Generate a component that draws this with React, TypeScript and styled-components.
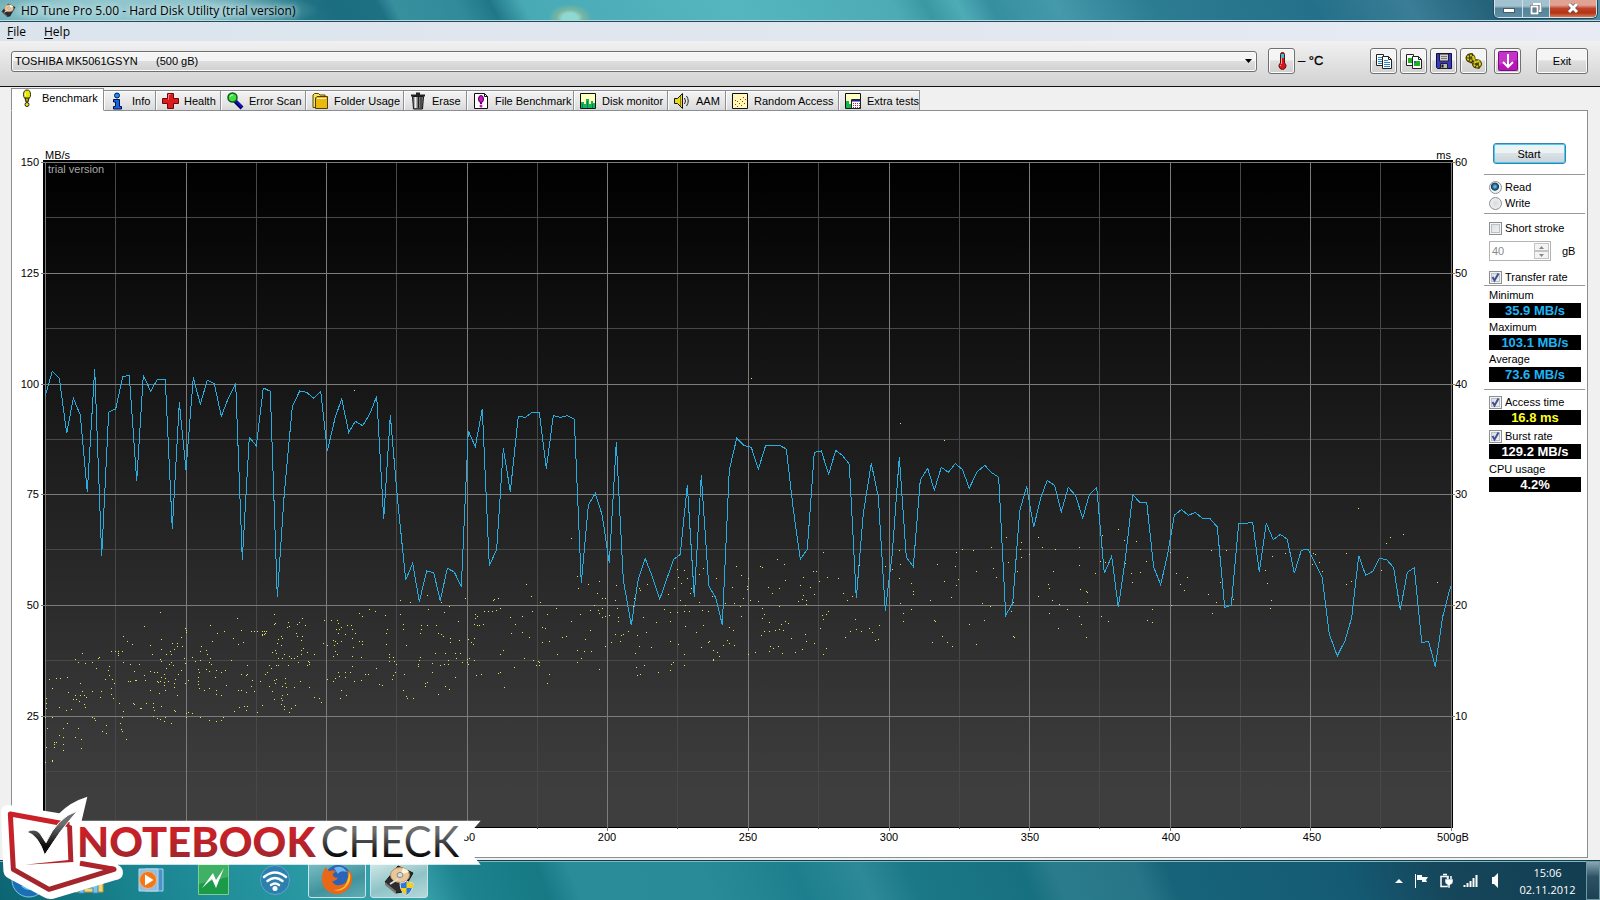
import React, { useState } from 'react';
import styled, { createGlobalStyle, css } from 'styled-components';

const ui = '"Liberation Sans", Arial, sans-serif';
const segoe = '"Open Sans", "Noto Sans", sans-serif';

const GlobalStyle = createGlobalStyle`
  *, *::before, *::after { box-sizing: border-box; }
  body { margin: 0; background: #f0f0f0; font: 11px/14px ${ui}; color: #000; }
  button, input, select { font: inherit; color: inherit; margin: 0; }
`;

/* ---------- window frame ---------- */

const Desktop = styled.div`
  position: relative;
  display: flex;
  flex-direction: column;
  min-height: 100vh;
`;

const TitleBar = styled.header`
  display: flex;
  align-items: center;
  height: 22px;
  padding-left: 1px;
  border-bottom: 1px solid #24475a;
  box-shadow: inset 0 -1px 0 #b5dbe3;
  background:
    radial-gradient(ellipse 22px 14px at 570px 18px, #8fd8d0 0 35%, #79b5a0 60%, transparent 100%),
    radial-gradient(ellipse 190px 26px at 130px 10px, #a5d2d8cc 0 50%, transparent 100%),
    linear-gradient(62deg, #4f9ba6 0, #2f8593 15%, #1b6d7f 21%, #1d7183 24%, #38909e 25%, #2f8a99 29%, #217788 31%,
      #48aab5 33%, #56b6c0 46%, #4cabb5 56%, #3a98a2 58%, #4dacb6 60%, #358f9e 62%, #4499aa 66%, #2c7c92 72%,
      #24708a 82%, #3a7d96 88%, #246279 93%, #5590a8 100%);
`;

const WindowTitle = styled.h1`
  flex: 1;
  margin: 0 0 0 5px;
  font: 400 12px/20px ${segoe};
  text-shadow: 0 0 6px #d8eef0, 0 0 6px #d8eef0;
`;

const WindowControls = styled.div`
  display: flex;
  align-self: flex-start;
  height: 18px;
  margin-right: 3px;
  border: 1px solid #cfe3ea;
  border-top: 0;
  border-radius: 0 0 5px 5px;
  overflow: hidden;
  box-shadow: 0 0 0 1px #25475a;
`;

const WindowButton = styled.button<{ $close?: boolean }>`
  display: grid;
  place-items: center;
  width: ${p => (p.$close ? 47 : 27)}px;
  padding: 0;
  border: 0;
  border-left: 1px solid #cfe0e8;
  background: ${p =>
    p.$close
      ? 'linear-gradient(#e0a293 0 30%, #c04228 50%, #b23418 75%, #d9754f)'
      : 'linear-gradient(#a3c2cf 0 35%, #55839a 50%, #5c8ea4)'};
  &:first-child { border-left: 0; }
`;

const MenuBar = styled.nav`
  display: flex;
  gap: 18px;
  height: 19px;
  padding-left: 7px;
  background: linear-gradient(90deg, #dbe4ed, #e2e7ef 60%, #e8ebf4);
`;

const MenuItem = styled.button`
  padding: 0;
  border: 0;
  background: none;
  font: 12px/20px ${segoe};
  u { text-underline-offset: 2px; }
`;

const ToolBar = styled.div`
  display: flex;
  align-items: center;
  height: 46px;
  padding: 0 12px 5px 11px;
  border-bottom: 1px solid #111;
  background: linear-gradient(#f1f1f1, #d2d2d2);
`;

const chrome = css`
  border: 1px solid #707070;
  border-radius: 3px;
  background: linear-gradient(#f4f4f4 0 45%, #dedede 50%, #d0d0d0);
  box-shadow: inset 0 0 0 1px #fbfbfb;
`;

const DriveField = styled.div`
  position: relative;
  flex: 1;
  display: flex;
  svg { position: absolute; right: 5px; top: 8px; pointer-events: none; }
`;

const DriveSelect = styled.select`
  ${chrome}
  appearance: none;
  width: 100%;
  height: 21px;
  padding: 0 3px;
`;

const ToolButton = styled.button<{ $wide?: boolean; $gap?: number }>`
  ${chrome}
  display: grid;
  place-items: center;
  width: ${p => (p.$wide ? 52 : 27)}px;
  height: 26px;
  margin-left: ${p => p.$gap ?? 3}px;
  padding: 0;
`;

const Temperature = styled.output`
  width: 69px;
  margin-left: 3px;
  font-size: 13px;
  -webkit-text-stroke: 0.3px #000;
`;

/* ---------- tabs and page ---------- */

const TabStrip = styled.div`
  display: flex;
  align-items: flex-end;
  height: 24px;
  margin: 0 11px -1px;
  position: relative;
`;

const Tab = styled.button<{ $w: number; $active?: boolean }>`
  display: flex;
  align-items: center;
  gap: 5px;
  width: ${p => p.$w}px;
  height: ${p => (p.$active ? 23 : 21)}px;
  padding: 0 0 0 5px;
  white-space: nowrap;
  border: 1px solid #8c8e96;
  border-left-width: ${p => (p.$active ? 1 : 0)}px;
  background: ${p => (p.$active ? '#fff' : 'linear-gradient(#f3f3f3, #e6e6e6 60%, #d9d9d9)')};
  box-shadow: ${p => (p.$active ? 'none' : 'inset 1px 1px 0 #fcfcfc')};
  border-bottom-color: ${p => (p.$active ? '#fff' : '#8c8e96')};
  svg { flex: none; }
  ${p => p.$active && 'gap: 7px; padding-bottom: 4px;'}
`;

const Page = styled.main`
  flex: 1;
  display: flex;
  margin: 0 12px 2px 11px;
  border: 1px solid #8b8f92;
  background: #fff;
`;

const Chart = styled.section`
  flex: 1;
  min-width: 0;
  display: grid;
  grid-template: 16px 1fr 29px / 31px 1fr 31px;
  padding-top: 33px;
`;

const UnitRow = styled.div`
  grid-column: 2;
  display: flex;
  justify-content: space-between;
  padding: 0 2px;
  line-height: 22px;
`;

const AxisLabels = styled.ol<{ $side: 'left' | 'right' }>`
  grid-row: 2;
  grid-column: ${p => (p.$side === 'left' ? 1 : 3)};
  display: flex;
  flex-direction: column;
  margin: -5px 0 8px;
  padding: ${p => (p.$side === 'left' ? '0 4px 0 0' : '0 0 0 2px')};
  text-align: ${p => (p.$side === 'left' ? 'right' : 'left')};
  list-style: none;
  li { flex: 1; }
`;

const PlotFrame = styled.div`
  grid-row: 2;
  grid-column: 2;
  position: relative;
  border: solid #000;
  border-width: 2px 1px 1px 2px;
  background: linear-gradient(#000, #141414 30%, #3e3e3e 95%);
`;

const PlotSvg = styled.svg`
  position: absolute;
  inset: 0;
  width: 100%;
  height: 100%;
  overflow: visible;
`;

const Watermark = styled.span`
  position: absolute;
  left: 3px;
  top: 0;
  color: #a8a8a8;
`;

const CapacityLabels = styled.ol`
  grid-row: 3;
  grid-column: 2;
  display: flex;
  margin: 2px -5% 0 5%;
  padding: 0;
  list-style: none;
  text-align: center;
  li { flex: 1; }
`;

/* ---------- side panel ---------- */

const SidePanel = styled.aside`
  display: flex;
  flex-direction: column;
  flex: none;
  width: 101px;
  margin: 32px 2px 0 0;
`;

const StartButton = styled.button`
  align-self: center;
  width: 73px;
  height: 21px;
  margin: 0 0 10px -11px;
  padding: 0;
  border: 1px solid #3c7fb1;
  border-radius: 3px;
  box-shadow: inset 0 0 0 1px #46cdf5;
  background: linear-gradient(#edf2f5 0 45%, #dbe2e6 50%, #c7d3da);
`;

const Rule = styled.hr`
  width: 100%;
  height: 1px;
  margin: 0;
  border: 0;
  background: #9a9a9a;
`;

const Group = styled.div<{ $gap?: number; $pad: string }>`
  display: flex;
  flex-direction: column;
  gap: ${p => p.$gap ?? 0}px;
  padding: ${p => p.$pad};
`;

const Choice = styled.label`
  display: flex;
  align-items: center;
  gap: 3px;
  height: 16px;
  white-space: nowrap;
`;

const Radio = styled.input.attrs({ type: 'radio' })`
  appearance: none;
  flex: none;
  width: 13px;
  height: 13px;
  border: 1px solid #8e8f8f;
  border-radius: 50%;
  background: radial-gradient(circle, #d8dbde, #f6f6f6);
  &:checked {
    background: radial-gradient(circle at 45% 42%, #7fd0f0 0, #1b5a82 32%, #123c5c 42%, #eef3f6 50%);
  }
`;

const Box = styled.span`
  display: grid;
  flex: none;
  width: 13px;
  height: 13px;
  input, svg { grid-area: 1 / 1; }
  input {
    appearance: none;
    width: 13px;
    height: 13px;
    border: 1px solid #8e8f8f;
    box-shadow: inset 0 0 0 1px #f4f4f4, inset 0 0 0 2px #bcc0c6;
    background: linear-gradient(135deg, #d5d9de, #f6f6f6);
  }
  svg { pointer-events: none; visibility: hidden; }
  input:checked + svg { visibility: visible; }
`;

const StrokeRow = styled.div`
  display: flex;
  align-items: center;
  gap: 11px;
  margin: 5px 0 8px;
`;

const Spinner = styled.div`
  display: flex;
  width: 62px;
  height: 20px;
  padding: 1px;
  border: 1px solid #b4b4b4;
  input {
    flex: 1;
    min-width: 0;
    padding: 0 1px;
    border: 0;
    background: #fff;
    color: #8a8a8a;
  }
`;

const SpinButtons = styled.div`
  display: flex;
  flex-direction: column;
  width: 15px;
`;

const SpinButton = styled.button`
  flex: 1;
  display: grid;
  place-items: center;
  min-height: 0;
  padding: 0;
  border: 1px solid #c4c4c4;
  background: #f3f3f3;
`;

const Caption = styled.div`
  height: 15px;
`;

const Reading = styled.output<{ $color: string }>`
  display: block;
  width: 92px;
  height: 15px;
  background: #000;
  color: ${p => p.$color};
  font-size: 13px;
  font-weight: 700;
  line-height: 15px;
  text-align: center;
`;

/* ---------- task bar ---------- */

const TaskBar = styled.footer`
  display: flex;
  flex: none;
  height: 40px;
  border-top: 1px solid #14404e;
  box-shadow: inset 0 1px 0 #7fb9c2;
  color: #fff;
  background: linear-gradient(68deg, #0c6472 0, #18828d 8%, #2a9aa5 20%, #3aa4ae 26%, #1d838e 29%, #167984 34%,
    #2b8c99 36%, #2a8b98 44%, #1d7f8d 50%, #2d8998 54%, #1b7886 57%, #17707f 64%, #2a7c8c 66%, #277587 71%,
    #17647a 73%, #145a73 84%, #16465a 90%, #123c50 100%);
`;

const TaskButton = styled.button<{ $state?: 'open' | 'active' }>`
  display: grid;
  place-items: center;
  width: 58px;
  height: 37px;
  margin-right: 4px;
  padding: 0;
  border: 1px solid transparent;
  border-radius: 3px;
  background: none;
  &:first-child { margin-right: 2px; }
  ${p => p.$state && css`
    border-color: #c5e5e8;
    background: ${p.$state === 'active'
      ? 'linear-gradient(160deg, #d5eaea, #8fc3c6 55%, #b4d9da)'
      : 'linear-gradient(160deg, #7fc0c6, #3f939c 60%, #5fadb4)'};
  `}
`;

const Tray = styled.div`
  display: flex;
  align-items: center;
  gap: 9px;
  margin-left: auto;
`;

const Clock = styled.time`
  width: 73px;
  margin-right: 7px;
  font: 11px/17px ${segoe};
  text-align: center;
`;

const ShowDesktop = styled.button`
  width: 14px;
  height: 39px;
  margin-left: -14px;
  padding: 0;
  border: 1px solid #6f97a4;
  background: linear-gradient(#8aa7b3, #2c5365 40%, #1c4152);
`;

const Brand = styled.svg`
  position: absolute;
  left: 0;
  bottom: 0;
  text { font-family: Lato, sans-serif; font-size: 125px; }
`;

/* ---------- measured data ---------- */

/* Each recording block has its own left edge and is stored at three units per plot pixel. */
type Block = { left: number; line: string; dots: string };
const TOP = 188;

const blocks: Block[] = [
  {
    left: -5,
    line: '16,137 37,64 58,84 80,250 100,145 121,195 142,425 164,57 185,618 206,186 227,177 248,80 268,76 290,392 310,76 332,124 352,88 376,88 397,537 418,157 438,360 460,82 481,163 502,91 523,101 544,199 565,145 587,102 607,629 628,262 649,287 670,114 691,124 712,742 733,430 757,170 779,123 800,127 821,145 842,124 862,303 885,205 905,146 926,247 946,214 968,227 989,192 1010,139 1031,506 1051,196 1072,440 1097,690 1118,640 1138,755 1160,663 1181,668 1201,752 1222,655 1243,666 1264,710 1285,243 1306,290 1327,177 1348,647 1370,598 1390,295',
    dots: '943,121 361,787 314,829 250,859 262,874 277,883 331,886 364,868 436,835 439,841 439,847 424,862 397,880 412,880 412,889 427,889 403,898 391,904 364,898 379,913 394,913 361,928 364,934 337,913 214,904 226,904 235,904 235,910 235,916 247,904 127,910 106,928 115,937 136,940 157,937 175,925 178,922 169,955 208,949 205,961 208,976 217,988 223,1000 196,988 28,988 49,985 61,985 82,982 121,1000 37,1015 85,1027 19,1045 19,1060 19,1075 16,1102 37,1102 58,1072 79,1081 94,1078 106,1036 100,1048 109,1048 121,1036 127,1024 133,1036 139,1042 118,1054 133,1063 136,1072 157,1024 184,1024 181,1042 214,1015 214,1033 220,1045 238,1060 157,1102 163,1105 166,1111 199,1126 187,1144 199,1150 241,1120 247,1102 250,1084 244,1138 247,1144 259,1168 82,1120 70,1135 22,1135 115,1135 58,1156 70,1162 106,1162 124,1168 43,1177 43,1183 49,1177 70,1183 43,1192 19,1192 70,1201 124,1195 37,1231 37,1235 16,1237 250,937 271,943 298,943 283,964 265,994 271,994 286,991 289,991 316,991 313,976 331,964 343,967 352,967 352,994 355,997 361,994 364,982 373,973 376,985 373,997 373,1006 385,994 403,1000 406,988 403,1012 376,1021 331,1021 358,1030 412,1036 280,1060 283,1063 301,1075 304,1075 319,1060 340,1060 340,1072 343,1081 340,1099 352,1105 361,1108 376,1102 373,1114 394,1120 364,1069 403,1081 406,1084 388,943 400,946 394,937 379,955 424,961 415,973 445,991 436,1000 433,925 436,940 457,922 466,934 481,931 484,889 481,904 502,913 499,901 511,925 508,937 514,943 475,958 478,967 475,982 475,994 475,1003 478,1015 499,958 508,964 529,961 544,967 556,961 526,982 508,1015 493,1021 529,1021 529,1033 544,1036 559,1006 574,931 511,826 517,874 532,850 553,844 592,805 604,841 580,865 595,883 610,877 634,844 643,844 652,844 667,844 673,844 679,844 667,853 667,856 673,853 676,850 703,793 706,820 703,823 745,817 748,829 742,832 772,823 778,817 787,805 796,826 769,850 772,859 787,859 784,871 724,859 727,865 715,868 712,880 724,886 697,907 706,901 709,910 715,925 727,925 733,913 748,919 754,925 763,925 772,919 784,913 784,901 790,895 802,907 823,913 805,934 808,937 808,943 802,946 775,937 745,946 715,946 709,946 688,946 694,955 682,967 676,973 661,994 637,991 622,973 619,976 622,946 604,973 634,1009 604,1021 595,1021 619,1027 643,1024 688,1009 703,991 706,1000 709,988 736,985 736,1000 739,1012 727,1009 763,1012 781,994 808,1012 697,1024 703,1048 727,1036 724,1045 727,1051 724,1063 733,1069 742,1033 766,1066 754,1075 748,1087 733,1078 667,1066 652,1087 619,1081 622,1069 613,1069 598,1072 583,1084 529,1114 508,1111 544,1111 550,1102 481,1102 457,1090 445,1087 439,1090 439,1102 823,1042 838,1045 844,1057 862,988 853,811 850,880 862,886 874,811 892,811 895,820 889,838 898,838 904,832 895,850 880,871 886,874 883,886 892,880 886,904 892,913 880,919 904,874 916,853 922,826 934,826 937,838 958,790 967,799 988,778 1006,784 946,850 937,865 958,874 967,874 967,883 940,892 937,919 937,949 964,922 931,967 916,967 895,967 898,979 886,985 880,994 916,982 943,994 904,1021 919,1036 901,1045 964,991 976,973 985,973 1009,955 1018,1003 1027,1006 1036,796 1042,838 1039,850 1039,883 1048,913 1048,922 1048,934 1060,922 1063,934 1069,943 1066,967 1060,976 1057,988 1093,973 1090,1021 1099,1039 1102,1045 1120,1045 1081,751 1111,757 1135,739 1162,736 1204,757 1228,769 1213,787 1165,778 1081,793 1090,823 1090,838 1099,886 1144,826 1144,838 1141,850 1162,826 1189,826 1195,850 1204,853 1210,859 1231,865 1255,814 1231,877 1186,910 1216,910 1246,910 1261,910 1141,922 1138,931 1135,943 1135,949 1177,940 1201,946 1213,943 1225,931 1225,943 1249,925 1267,937 1282,937 1282,928 1285,943 1303,931 1288,925 1177,967 1162,997 1156,1000 1156,1009 1195,1033 1216,1009 1228,1018 1246,982 1276,745 1258,871 1285,868 1294,877 1303,865 1300,883 1303,823 1312,826 1318,826 1306,805 1312,799 1306,793 1330,823 1333,784 1345,784 1357,784 1369,781 1360,751 1363,748 1375,745 1381,775 1411,802 1426,823 1414,850 1390,901 1381,913 1423,952 1381,967 1375,970 1324,973 1309,976 1393,1012',
  },
  {
    left: 455,
    line: '10,295 31,425 55,199 76,202 97,187 118,187 139,356 160,197 181,202 202,197 223,207 244,700 265,466 286,430 307,497 328,640 349,277 370,690 394,826 415,687 436,626 458,683 479,748 500,688 521,628 541,613 562,405 583,741 604,375 626,707 647,743 667,824 688,360 710,265 731,286 754,292 775,358 797,286 838,286 859,297 880,478 901,628 922,598 943,307 964,303 986,373 1007,301 1028,317 1048,343 1069,745 1090,490 1114,340 1135,440 1156,782 1177,610 1198,320 1219,622 1240,650 1261,390 1283,355 1303,421 1324,352 1345,367 1366,341',
    dots: '754,85 1201,220 1333,271 214,565 79,703 94,739 121,757 1,775 97,784 142,793 169,775 31,802 67,799 46,823 34,850 67,847 88,862 127,832 136,835 127,877 148,874 187,862 199,859 10,901 1,913 73,925 100,931 115,934 118,937 109,946 118,946 43,952 1,967 148,973 142,1000 13,1012 172,913 232,901 253,904 274,904 256,868 271,841 214,814 241,793 232,679 235,715 265,703 298,694 292,730 307,745 316,745 283,766 295,781 307,775 298,790 307,802 316,799 328,796 271,781 346,751 349,706 355,802 355,814 352,775 385,778 400,769 403,745 418,715 421,721 442,703 430,802 469,817 412,856 439,847 385,844 364,856 370,853 346,853 361,874 334,877 316,889 418,889 454,892 406,910 433,946 409,952 421,973 412,976 475,967 514,943 520,937 511,961 244,925 232,937 298,958 493,778 505,733 523,715 532,658 553,661 535,682 562,685 544,700 571,730 541,751 556,766 553,784 511,787 532,787 568,784 511,814 556,829 589,847 610,826 511,874 535,883 604,892 625,877 628,874 553,913 553,946 640,901 652,907 658,919 640,928 640,931 670,886 682,871 688,880 703,886 700,841 688,832 676,760 703,760 721,769 730,745 751,751 742,709 742,718 745,685 724,676 709,649 697,712 649,685 610,655 598,673 574,715 598,757 607,781 625,784 637,739 724,799 781,649 787,652 832,628 853,643 856,691 805,712 838,715 817,730 775,754 838,769 787,775 793,793 787,805 808,817 844,823 856,814 865,820 838,838 826,841 850,841 793,844 808,844 784,856 874,865 811,889 820,895 835,889 808,904 847,910 766,907 745,913 886,907 907,898 919,874 943,880 979,895 970,913 916,853 961,835 970,808 979,793 985,784 967,796 919,763 895,754 907,748 910,736 901,706 931,712 943,733 919,751 958,694 910,682 940,664 949,664 970,607 982,682 1015,685 1030,730 1042,751 1057,739 1066,808 1036,862 1051,844 1069,838 1084,844 1108,835 1117,847 1138,826 1135,868 1126,871 1156,649 1177,658 1198,601 1201,643 1198,685 1234,700 1240,724 1240,733 1201,760 1234,778 1210,790 1210,814 1291,751 1312,643 1333,694 1369,607 1387,598 1366,649 1375,688 1369,706 1354,742 1303,811 1306,814 1327,859 1297,877 1342,877 1357,889 1078,646',
  },
  {
    left: 915,
    line: '7,358 28,415 50,367 74,346 95,368 116,382 137,796 158,760 179,482 200,409 221,532 242,443 262,391 284,407 304,485 325,412 347,437 368,505 388,434 410,412 433,670 455,619 475,772 496,628 518,434 539,457 560,457 581,652 602,704 623,612 643,496 664,479 686,496 706,487 727,505 749,505 772,531 794,772 814,766 836,520 857,520 878,517 898,665 919,520 940,569 961,553 982,568 1003,670 1024,601 1045,598 1066,640 1087,684 1108,852 1132,918 1155,872 1175,803 1196,617 1217,676 1238,664 1258,625 1280,629 1301,653 1321,781 1342,667 1363,653 1385,877 1406,875 1426,950 1448,800 1472,708',
    dots: '7,598 40,601 94,592 139,562 145,637 181,598 184,577 184,622 208,613 235,562 247,592 286,598 358,592 358,646 100,655 49,664 109,682 172,664 280,664 265,703 268,715 235,739 277,751 298,763 268,790 322,778 361,718 379,724 382,727 382,757 358,799 364,823 379,862 295,835 67,760 91,769 160,757 154,784 73,811 28,823 49,883 160,859 163,862 406,670 427,556 421,634 436,637 475,538 493,571 529,574 496,640 514,670 541,667 517,697 487,691 484,715 424,799 445,814 559,634 577,778 562,811 577,817 634,766 631,607 649,670 682,682 661,703 673,721 754,601 799,601 745,733 781,697 769,757 820,748 757,790 916,661 937,619 922,700 934,751 931,775 976,610 1060,610 1066,613 1057,643 1078,637 1087,664 1090,715 1093,727 1159,610 1174,694 1159,703 1195,475 1279,580 1291,562 1330,553 1264,661 1432,697',
  },
];

const toPlot = (left: number, pairs: string) =>
  pairs.split(' ').map(pair => {
    const [x, y] = pair.split(',').map(Number);
    return [left + x / 3, TOP + y / 3];
  });

const rateLine = blocks.flatMap(b => toPlot(b.left, b.line)).map(p => p.map(n => n.toFixed(1)).join(',')).join(' ');
const accessDots = blocks
  .flatMap(b => toPlot(b.left, b.dots))
  .map(([x, y]) => `M${Math.floor(x)} ${Math.floor(y) + 0.5}h1`)
  .join('');

const steps = (n: number) => Array.from({ length: n + 1 }, (_, i) => i);

function Plot() {
  return (
    <PlotSvg viewBox="0 0 1407 665" preserveAspectRatio="none" shapeRendering="crispEdges" aria-hidden="true">
      <g stroke="#484848">
        {steps(9).map(i => <path key={i} d={`M${Math.round(i * 140.6 + 70)}.5 0V667`} />)}
        {steps(5).map(i => <path key={i} d={`M0 ${Math.round(i * 110.8 + 55)}.5H1407`} />)}
      </g>
      <g stroke="#7c7c7c">
        {steps(10).map(i => <path key={i} d={`M${Math.round(i * 140.6)}.5 0V669`} />)}
        {steps(5).map(i => <path key={i} d={`M-4 ${Math.round(i * 110.8)}.5H1410`} />)}
      </g>
      <path d={accessDots} stroke="#e6e650" />
      <polyline points={rateLine} fill="none" stroke="#2bacdf" vectorEffect="non-scaling-stroke" />
    </PlotSvg>
  );
}

/* ---------- icons ---------- */

const Icon = ({ children, size = 18 }: { children: React.ReactNode; size?: number }) => (
  <svg width={size} height={size} viewBox="0 0 18 18" aria-hidden="true">{children}</svg>
);

const icons = {
  benchmark: (
    <Icon><ellipse cx="10" cy="5.500" rx="3.500" ry="4.500" fill="#e8e800" stroke="#222" /><path d="M8 9h4l-1 4H9z" fill="#b0a800" stroke="#222" /><circle cx="10" cy="15.500" r="2" fill="#e8e800" stroke="#222" /><path d="M8.500 4v3" stroke="#fff" /></Icon>
  ),
  info: (
    <Icon><circle cx="8" cy="3.500" r="2.500" fill="#1990f0" stroke="#001a60" /><path d="M4.500 7.500h6v7h2v2.500h-8v-2.500h2v-4.500h-2z" fill="#1466e8" stroke="#001040" /></Icon>
  ),
  health: (
    <Icon><path d="M6.500 1.500h6v5h5v5h-5v5h-6v-5h-5v-5h5z" fill="#dc1c1c" stroke="#6b0808" /><path d="M7.500 7.500v-5h2" fill="none" stroke="#ff8080" /></Icon>
  ),
  scan: (
    <Icon><path d="M9 9l7 7" stroke="#000050" strokeWidth="4" /><path d="M10 9l6 6" stroke="#1010d0" strokeWidth="2" /><circle cx="6.500" cy="5.500" r="4.500" fill="#3fe03f" stroke="#0c5c18" strokeWidth="1.500" /><path d="M4 5a2.500 2.500 0 0 1 3-2" fill="none" stroke="#c8ffc8" /></Icon>
  ),
  folder: (
    <Icon><path d="M2 15.500V3l1.500-1.500h4L9 3h5v12.500z" fill="#f7e36a" stroke="#5a4600" /><path d="M4.500 16.500V6l1.500-1.500h10.500v12z" fill="#e9b90f" stroke="#4e3b00" /><path d="M6 6.500h9" stroke="#fff3a0" /></Icon>
  ),
  erase: (
    <Icon><path d="M3.500 4.500h11l-1 12.500h-9z" fill="#777" stroke="#111" /><path d="M6.500 5v11" stroke="#eee" strokeWidth="2" /><path d="M9.500 5v11M12 5v11" stroke="#222" /><path d="M2 3.500h14M7 1.500h4" stroke="#222" strokeWidth="2" /></Icon>
  ),
  file: (
    <Icon><path d="M2.500 1.500h10l3 3v12h-13z" fill="#fff" stroke="#111" /><path d="M12.500 1.500v3h3" fill="none" stroke="#111" /><ellipse cx="9" cy="7" rx="2.500" ry="3.500" fill="#d010d0" stroke="#500050" /><path d="M9 10v2" stroke="#500050" strokeWidth="2" /><circle cx="9" cy="14" r="1.500" fill="#d010d0" /></Icon>
  ),
  monitor: (
    <Icon><path d="M1.500 1.500h15v15h-15z" fill="#ffffc0" stroke="#111" /><path d="M2 16v-6h3v2h2V7h3v5h2v-3h2v2h2v5z" fill="#12b848" /><path d="M3.500 12v4M8.500 9v7M13.500 12v4" stroke="#0a6f9a" /></Icon>
  ),
  aam: (
    <Icon><path d="M1.500 6.500h3l5-5v15l-5-5h-3z" fill="#e8dc20" stroke="#111" /><path d="M7.500 4v10" stroke="#8a7c00" /><path d="M11.500 6q2 3 0 6M13.500 4q3.500 5 0 10" fill="none" stroke="#222" /></Icon>
  ),
  random: (
    <Icon><path d="M1.500 1.500h15v15h-15z" fill="#fff8b8" stroke="#111" /><path d="M4 12.500h1M6 9.500h1M6 14.500h1M8 11.500h1M9 7.500h1M10 13.500h1M11 9.500h1M12 5.500h1M13 11.500h1M14 7.500h1M4 8.500h1" stroke="#c03000" /></Icon>
  ),
  extra: (
    <Icon><path d="M1.500 1.500h15v15h-15z" fill="#ffffc0" stroke="#111" /><path d="M2 16V9h3v3h3v4z" fill="#12b848" /><path d="M7.500 7.500h9v9h-9z" fill="#fff" stroke="#222" /><path d="M8 8.500h8" stroke="#102090" strokeWidth="2" /><path d="M9 11.500h7M9 13.500h7M9 15.500h7" stroke="#a03060" strokeDasharray="1 1" /></Icon>
  ),
};

const Sheets = ({ picture }: { picture?: boolean }) => (
  <Icon>
    <path d="M1.500 2.500h7v11h-7z" fill="#fff" stroke="#222" />
    {picture && <path d="M3 6h4v5H3z" fill="#20b020" />}
    <path d="M7.500 4.500h6l3 3v9h-9z" fill="#fff" stroke="#222" />
    <path d="M13.500 4.500v3h3" fill="none" stroke="#222" />
    {picture ? (
      <><path d="M9 9h6v5H9z" fill="#20b020" /><path d="M9 9h2v2H9z" fill="#2060d0" /></>
    ) : (
      <path d="M3 5.500h4M3 7.500h4M3 9.500h4M3 11.500h4M9 8.500h4M9 10.500h6M9 12.500h6M9 14.500h6" stroke="#2a86c8" />
    )}
  </Icon>
);

const Floppy = () => (
  <Icon><path d="M1.500 1.500h15v15h-14l-1-1z" fill="#3838c8" stroke="#101030" /><path d="M4.500 2h9v7h-9z" fill="#d0d0d0" stroke="#222" /><path d="M6 4.500h6M6 6.500h6" stroke="#777" /><path d="M5.500 11.500h7v5h-7z" fill="#bbb" stroke="#222" /><path d="M7.500 12.500v3" stroke="#111" strokeWidth="2" /></Icon>
);

const Chain = () => (
  <Icon><g fill="none" stroke="#3c3600" strokeWidth="4"><path d="M3 4l5-1M2.500 7l5 3M9 9l6 1M9 13l6 2" /><ellipse cx="5.500" cy="6" rx="3" ry="2.500" /><ellipse cx="12" cy="12" rx="3" ry="2.500" /></g><g fill="none" stroke="#dccb1c" strokeWidth="2" strokeDasharray="2 1"><ellipse cx="5.500" cy="6" rx="3" ry="2.500" /><ellipse cx="12" cy="12" rx="3" ry="2.500" /><path d="M8 4l2 6 5-1" /></g></Icon>
);

const DownArrow = () => (
  <svg width="20" height="20" viewBox="0 0 20 20" aria-hidden="true"><rect x=".5" y=".5" width="19" height="19" rx="1" fill="#b516b8" stroke="#7a0c80" /><path d="M1 1h18v8L1 14z" fill="#d04ad2" opacity=".6" /><path d="M10 3v13M5 11l5 5 5-5" fill="none" stroke="#fff" strokeWidth="2" /></svg>
);

const Thermometer = () => (
  <Icon><path d="M7.500 11V2.500a1.500 1.500 0 0 1 4 0V11a3.500 3.500 0 1 1-4 0z" fill="#d81818" stroke="#5a1010" /><path d="M8 2h3v4H8z" fill="#35c4d0" /><path d="M8.500 6v6M7.500 13v1" stroke="#ff9a9a" /></Icon>
);

const Disk = ({ size, shield }: { size: number; shield?: boolean }) => (
  <svg width={size} height={size} viewBox="0 0 32 32" aria-hidden="true">
    <path d="M2 18L15 2l15 7-11 19-6 1z" fill="#2c2c2c" stroke="#111" />
    <path d="M2 18l11 9v3L2 21z" fill="#777" />
    <ellipse cx="17" cy="11" rx="9.500" ry="7.500" fill="#e8c79a" stroke="#b78e5c" />
    <path d="M17 11l9-3a9 7 0 0 0-6-4z" fill="#fff3dc" />
    <ellipse cx="17" cy="11" rx="3" ry="2.500" fill="#ddd" stroke="#888" />
    <path d="M7 20l8-5" stroke="#ddd" strokeWidth="2" />
    {shield && <><path d="M17 19q4 0 6.500-2 2.500 2 6.500 2 0 9-6.500 12.500Q17 28 17 19z" fill="#2a78d8" stroke="#e8e8e8" /><path d="M23.500 18v6H30q1-3 0-5-4 0-6.500-1zM23.500 24v7q-4-2-6-7z" fill="#f5ce1e" /></>}
  </svg>
);

const tabs: { id: keyof typeof icons; label: string; width: number }[] = [
  { id: 'benchmark', label: 'Benchmark', width: 93 },
  { id: 'info', label: 'Info', width: 52 },
  { id: 'health', label: 'Health', width: 65 },
  { id: 'scan', label: 'Error Scan', width: 85 },
  { id: 'folder', label: 'Folder Usage', width: 98 },
  { id: 'erase', label: 'Erase', width: 63 },
  { id: 'file', label: 'File Benchmark', width: 107 },
  { id: 'monitor', label: 'Disk monitor', width: 94 },
  { id: 'aam', label: 'AAM', width: 58 },
  { id: 'random', label: 'Random Access', width: 113 },
  { id: 'extra', label: 'Extra tests', width: 81 },
];

function Check({ label, defaultChecked }: { label: string; defaultChecked?: boolean }) {
  return (
    <Choice>
      <Box>
        <input type="checkbox" defaultChecked={defaultChecked} />
        <svg width="13" height="13" viewBox="0 0 13 13" aria-hidden="true"><path d="M3.500 6l2 3.500 4-7" fill="none" stroke="#3f4f96" strokeWidth="2" /></svg>
      </Box>
      {label}
    </Choice>
  );
}

function Sidebar() {
  const [mode, setMode] = useState('Read');
  return (
    <SidePanel>
      <StartButton>Start</StartButton>
      <Rule />
      <Group $pad="4px 0 2px 5px">
        {['Read', 'Write'].map(m => (
          <Choice key={m}>
            <Radio name="mode" checked={mode === m} onChange={() => setMode(m)} />
            {m}
          </Choice>
        ))}
      </Group>
      <Rule />
      <Group $pad="6px 0 0 5px">
        <Check label="Short stroke" />
        <StrokeRow>
          <Spinner>
            <input aria-label="Short stroke size" defaultValue="40" disabled />
            <SpinButtons>
              <SpinButton aria-label="Increase" disabled><svg width="5" height="3"><path d="M0 3l2.500-3L5 3z" fill="#888" /></svg></SpinButton>
              <SpinButton aria-label="Decrease" disabled><svg width="5" height="3"><path d="M0 0l2.500 3L5 0z" fill="#888" /></svg></SpinButton>
            </SpinButtons>
          </Spinner>
          gB
        </StrokeRow>
        <Check label="Transfer rate" defaultChecked />
      </Group>
      <Rule />
      <Group $pad="2px 0 7px 5px" $gap={2}>
        <div><Caption>Minimum</Caption><Reading $color="#1fb4f5">35.9 MB/s</Reading></div>
        <div><Caption>Maximum</Caption><Reading $color="#1fb4f5">103.1 MB/s</Reading></div>
        <div><Caption>Average</Caption><Reading $color="#1fb4f5">73.6 MB/s</Reading></div>
      </Group>
      <Rule />
      <Group $pad="4px 0 0 5px" $gap={3}>
        <div><Check label="Access time" defaultChecked /><Reading $color="#ffff20">16.8 ms</Reading></div>
        <div><Check label="Burst rate" defaultChecked /><Reading $color="#fff">129.2 MB/s</Reading></div>
        <div><Caption>CPU usage</Caption><Reading $color="#fff">4.2%</Reading></div>
      </Group>
    </SidePanel>
  );
}

function NotebookcheckLogo() {
  return (
    <Brand width="500" height="120" viewBox="0 0 1500 360" role="img" aria-label="Notebookcheck">
      <defs>
        <linearGradient id="red" x2="0" y2="1"><stop offset=".3" stopColor="#cb2027" /><stop offset=".8" stopColor="#a3262c" /></linearGradient>
        <linearGradient id="grey" x2="0" y2="1"><stop offset=".3" stopColor="#6d6e70" /><stop offset=".8" stopColor="#0a0a0a" /></linearGradient>
      </defs>
      <path d="M3 98Q3 74 27 75L178 100Q210 66 262 50L245 122H1442L1386 187L1442 254H352Q372 262 368 284Q366 297 345 301L160 356Q145 360 132 352L24 294Q10 286 10 270Z" fill="#fff" />
      <path d="M208 134L31 102L40 268L147 328L342 268L240 250" fill="none" stroke="url(#red)" strokeWidth="15" strokeLinejoin="round" />
      <path d="M201 130L216 138L220 246L75 254L205 240Z" fill="#b3232a" />
      <path d="M232 248L342 260L346 268L338 275L300 262Z" fill="#b3232a" />
      <path d="M80 156Q104 142 120 160L138 188Q172 112 232 93Q180 150 134 225Q114 164 80 156Z" fill="url(#grey)" stroke="#fff" strokeWidth="3" />
      <text x="231" y="232" fontWeight="900" fill="url(#red)">NOTEBOOK</text>
      <text x="962" y="232" fontWeight="400" fill="url(#grey)">CHECK</text>
    </Brand>
  );
}

export default function App() {
  const [active, setActive] = useState('benchmark');
  return (
    <Desktop>
      <GlobalStyle />
      <TitleBar>
        <Disk size={15} />
        <WindowTitle>HD Tune Pro 5.00 - Hard Disk Utility (trial version)</WindowTitle>
        <WindowControls>
          <WindowButton aria-label="Minimize"><svg width="12" height="12"><rect x=".5" y="5.500" width="11" height="4" fill="#fff" stroke="#4a5b66" /></svg></WindowButton>
          <WindowButton aria-label="Restore"><svg width="12" height="12"><path d="M3.500 2V1h7v7h-1.500M1.500 3.500h6v7h-6z" fill="none" stroke="#44545f" strokeWidth="3" /><path d="M3.500 2V1h7v7h-1.500M1.500 3.500h6v7h-6z" fill="none" stroke="#fff" strokeWidth="2" /></svg></WindowButton>
          <WindowButton $close aria-label="Close"><svg width="12" height="11"><path d="M2 1l8 8M10 1L2 9" stroke="#5b4648" strokeWidth="4" /><path d="M2 1l8 8M10 1L2 9" stroke="#fff" strokeWidth="3" /></svg></WindowButton>
        </WindowControls>
      </TitleBar>
      <MenuBar>
        <MenuItem><u>F</u>ile</MenuItem>
        <MenuItem><u>H</u>elp</MenuItem>
      </MenuBar>
      <ToolBar>
        <DriveField>
          <DriveSelect aria-label="Drive">
            <option>TOSHIBA MK5061GSYN{'\u00a0'.repeat(6)}(500 gB)</option>
          </DriveSelect>
          <svg width="7" height="4" aria-hidden="true"><path d="M0 0h7L3.500 4z" /></svg>
        </DriveField>
        <ToolButton $gap={11} aria-label="Temperature"><Thermometer /></ToolButton>
        <Temperature>– °C</Temperature>
        <ToolButton aria-label="Copy text"><Sheets /></ToolButton>
        <ToolButton aria-label="Copy screenshot"><Sheets picture /></ToolButton>
        <ToolButton aria-label="Save"><Floppy /></ToolButton>
        <ToolButton aria-label="Options"><Chain /></ToolButton>
        <ToolButton $gap={7} aria-label="Minimize to tray"><DownArrow /></ToolButton>
        <ToolButton $gap={15} $wide>Exit</ToolButton>
      </ToolBar>
      <TabStrip role="tablist">
        {tabs.map(t => (
          <Tab key={t.id} role="tab" aria-selected={t.id === active} $active={t.id === active} $w={t.width} onClick={() => setActive(t.id)}>
            {icons[t.id]}
            {t.label}
          </Tab>
        ))}
      </TabStrip>
      <Page>
        <Chart>
          <UnitRow><span>MB/s</span><span>ms</span></UnitRow>
          <AxisLabels $side="left">{[150, 125, 100, 75, 50, 25].map(n => <li key={n}>{n}</li>)}</AxisLabels>
          <PlotFrame>
            <Plot />
            <Watermark>trial version</Watermark>
          </PlotFrame>
          <AxisLabels $side="right">{[60, 50, 40, 30, 20, 10].map(n => <li key={n}>{n}</li>)}</AxisLabels>
          <CapacityLabels>
            {['', '', '150', '200', '250', '300', '350', '400', '450', '500gB'].map((n, i) => <li key={i}>{n}</li>)}
          </CapacityLabels>
        </Chart>
        <Sidebar />
      </Page>
      <TaskBar>
        <TaskButton aria-label="Start menu">
          <svg width="36" height="36" viewBox="0 0 36 36"><circle cx="18" cy="18" r="17" fill="#1c6fb4" stroke="#7cc8ea" /><path d="M10 24q8 8 16 0z" fill="#58c8f4" /></svg>
        </TaskButton>
        <TaskButton aria-label="Explorer">
          <svg width="32" height="30" viewBox="0 0 32 30"><path d="M2 6h12l2 3h14v18H2z" fill="#f2d675" stroke="#c79a2c" /><path d="M6 28v-9h19v9h-5v-5h-9v5z" fill="#7cc4ea" stroke="#3d8bc0" /></svg>
        </TaskButton>
        <TaskButton aria-label="Media Player">
          <svg width="28" height="26" viewBox="0 0 28 26"><path d="M8 2h18v22H8z" fill="#4a93c8" stroke="#a8d4ee" /><path d="M2 2h19v22H2z" fill="#8dc0e4" stroke="#b6d9ee" /><circle cx="11" cy="13" r="8.500" fill="#f07818" stroke="#f6b27c" /><path d="M8 7.500v11l8.500-5.500z" fill="#fff" /></svg>
        </TaskButton>
        <TaskButton aria-label="Power">
          <svg width="31" height="31" viewBox="0 0 31 31"><path d="M.5.5h30v30H.5z" fill="#1b9a48" stroke="#7fce98" /><path d="M1 1h29v12L1 20z" fill="#5abf7a" opacity=".6" /><path d="M4 24L15 9l3 7 8-12-8 20-4-9z" fill="#fff" /></svg>
        </TaskButton>
        <TaskButton aria-label="Wireless">
          <svg width="32" height="32" viewBox="0 0 32 32"><circle cx="16" cy="16" r="14.500" fill="#2c7fae" stroke="#5aa9cc" /><g fill="none" stroke="#fff" strokeWidth="2.500" strokeLinecap="round"><path d="M5 13q11-9 22 0M8.500 17q7.500-6 15 0M12 21q4-3 8 0" /></g><circle cx="16" cy="24.500" r="2.500" fill="#fff" /></svg>
        </TaskButton>
        <TaskButton $state="open" aria-label="Firefox">
          <svg width="34" height="32" viewBox="0 0 34 32"><circle cx="18" cy="14" r="13" fill="#2a64b8" /><path d="M14 4q8-4 13 4-7-2-9 2z" fill="#6fb4ea" /><path d="M30 6q5 10-1 18-6 7-14 6Q4 28 2 18 1 9 6 3q1 4 4 4 4-2 6 1-4 1-3 4 2 2 5 2-3 4-6 3 2 5 8 4 7-1 8-8 0-4-1-7 3 2 3 4 1-2 0-4z" fill="#e8681a" /><path d="M29 7q4 10-4 17-5 4-11 2 10 0 13-8 2-6 2-11z" fill="#fbc02d" /></svg>
        </TaskButton>
        <TaskButton $state="active" aria-label="HD Tune Pro"><Disk size={32} shield /></TaskButton>
        <Tray>
          <svg width="8" height="4" aria-label="Show hidden icons"><path d="M0 4h8L4 0z" fill="#fff" /></svg>
          <svg width="18" height="16" aria-hidden="true"><path d="M3.500 1v14" stroke="#fff" /><path d="M5 2h5v2h6l-2 3 1 2h-5v-2H5z" fill="#fff" /></svg>
          <svg width="15" height="16" aria-hidden="true"><path d="M2 3.500h7v10H2zM4 1.500h4" fill="none" stroke="#fff" strokeWidth="1.500" /><path d="M6 6h8v3q0 2-3 3v3h-2v-3Q6 11 6 9z" fill="#fff" stroke="#1a4a5e" strokeWidth=".5" /><path d="M8.500 3v3M12 3v3" stroke="#fff" strokeWidth="1.500" /></svg>
          <svg width="16" height="14" aria-hidden="true"><path d="M1.500 11v2M4.500 9v4M7.500 7v6M10.500 4v9M13.500 1v12" stroke="#fff" strokeWidth="2" /></svg>
          <svg width="14" height="15" aria-hidden="true"><path d="M4 4h2l4-4v15l-4-4H4z" fill="#fff" /></svg>
          <Clock>15:06<br />02.11.2012</Clock>
          <ShowDesktop aria-label="Show desktop" />
        </Tray>
      </TaskBar>
      <NotebookcheckLogo />
    </Desktop>
  );
}
